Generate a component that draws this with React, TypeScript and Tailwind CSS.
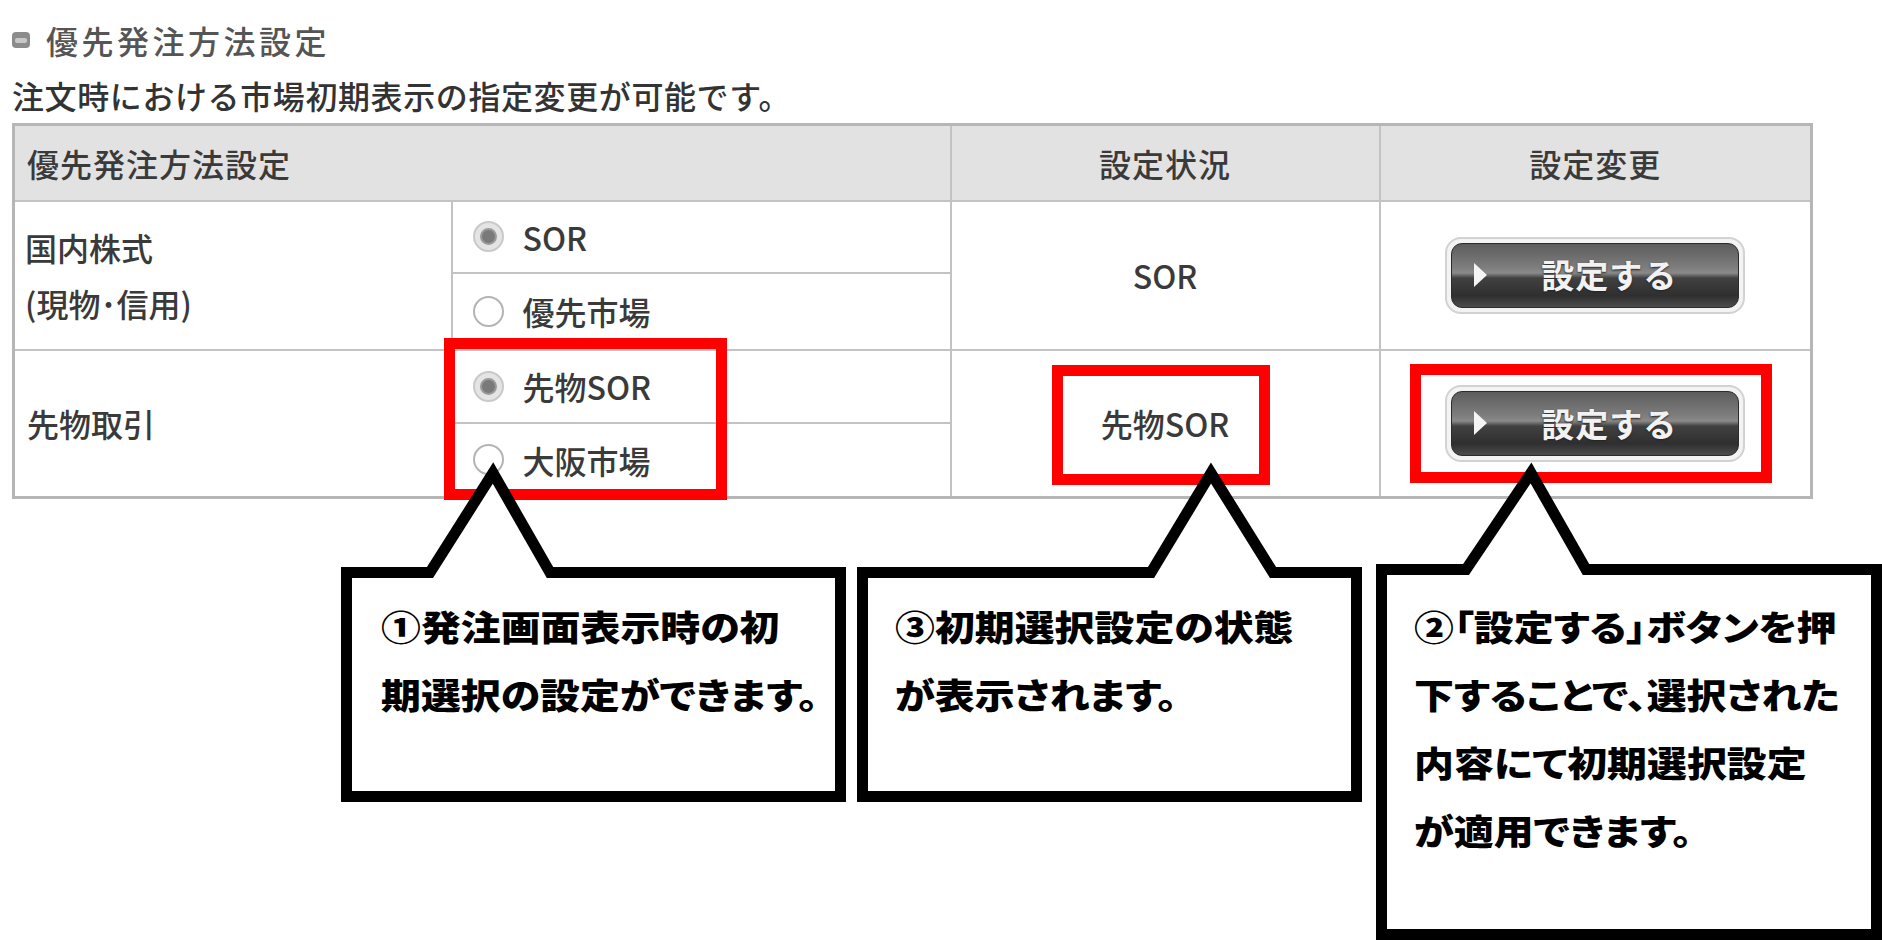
import React from "react";

function Radio({ checked, label }: { checked?: boolean; label: string }) {
  return (
    <div className="flex items-center">
      {checked ? (
        <span className="flex items-center justify-center w-[31px] h-[31px] rounded-full border-2 border-[#c9c9c9] bg-[#e4e4e4]">
          <span className="w-[17px] h-[17px] rounded-full bg-[#7a7a7a] border-2 border-[#9a9a9a]" />
        </span>
      ) : (
        <span className="w-[31px] h-[31px] rounded-full border-2 border-[#b4b4b4] bg-white" />
      )}
      <span className="ml-[19px]">{label}</span>
    </div>
  );
}

function SetButton() {
  return (
    <span className="inline-flex w-[300px] h-[77px] rounded-[16px] border-2 border-[#d2d2d2] bg-[#f3f3f3] p-[4px] align-middle">
      <span className="flex items-center w-full h-full rounded-[11px] border border-[#2c2c2c] bg-[linear-gradient(to_bottom,#5c5c5c_0%,#7e7e7e_38%,#8a8a8a_46%,#414141_54%,#2f2f2f_82%,#4c4c4c_100%)] pl-[22px]">
        <svg width="13" height="24" viewBox="0 0 13 24" className="shrink-0">
          <path d="M0 0 L13 12 L0 24 Z" fill="#f4f4f4" />
        </svg>
        <span className="ml-[54px] text-[#f2f2f2] font-bold text-[33px] tracking-[1px] [text-shadow:0_1px_2px_#222]">
          設定する
        </span>
      </span>
    </span>
  );
}

export default function App() {
  const cell = "border-2 border-[#c3c3c3]";
  return (
    <div className="relative w-[1882px] h-[940px] overflow-hidden bg-white font-['Noto_Sans_CJK_JP','Noto_Sans',sans-serif] text-[#3a3a3a]">
      <div className="pl-[12px]">
        {/* Title */}
        <div className="flex items-center h-[40px] mt-[20px]">
          <span className="flex items-center w-[18px] h-[16px] rounded-[4px] bg-[#8c8c8c] px-[3px]">
            <span className="w-full h-[5px] rounded-[2px] bg-[#c8c8c8]" />
          </span>
          <span className="ml-[16px] text-[32px] font-medium tracking-[3.5px] text-[#555] leading-[40px]">優先発注方法設定</span>
        </div>
        <div className="mt-[15px] h-[40px] leading-[40px] text-[32px] font-medium tracking-[0.6px] text-[#333]">
          注文時における市場初期表示の指定変更が可能です。
        </div>

        {/* Table */}
        <table className="mt-[8px] table-fixed border-collapse w-[1798px] border-[3px] border-[#b6b6b6] text-[32px] font-medium">
          <colgroup>
            <col className="w-[438px]" />
            <col className="w-[499px]" />
            <col className="w-[429px]" />
            <col className="w-[432px]" />
          </colgroup>
          <thead>
            <tr className="h-[76px] bg-[#e2e2e2]">
              <th colSpan={2} className={`${cell} text-left font-medium pl-[12px] tracking-[1px]`}>
                優先発注方法設定
              </th>
              <th className={`${cell} text-center font-medium tracking-[1px]`}>設定状況</th>
              <th className={`${cell} text-center font-medium tracking-[1px]`}>設定変更</th>
            </tr>
          </thead>
          <tbody>
            <tr className="h-[72px]">
              <td rowSpan={2} className={`${cell} pl-[10px] leading-[56px] align-middle`}>
                国内株式
                <br />
                (現物･信用)
              </td>
              <td className={`${cell} pl-[20px]`}>
                <Radio checked label="SOR" />
              </td>
              <td rowSpan={2} className={`${cell} text-center`}>
                SOR
              </td>
              <td rowSpan={2} className={`${cell} text-center`}>
                <SetButton />
              </td>
            </tr>
            <tr className="h-[77px]">
              <td className={`${cell} pl-[20px]`}>
                <Radio label="優先市場" />
              </td>
            </tr>
            <tr className="h-[73px]">
              <td rowSpan={2} className={`${cell} pl-[12px] align-middle`}>
                先物取引
              </td>
              <td className={`${cell} pl-[20px]`}>
                <Radio checked label="先物SOR" />
              </td>
              <td rowSpan={2} className={`${cell} text-center`}>
                先物SOR
              </td>
              <td rowSpan={2} className={`${cell} text-center`}>
                <SetButton />
              </td>
            </tr>
            <tr className="h-[75px]">
              <td className={`${cell} pl-[20px]`}>
                <Radio label="大阪市場" />
              </td>
            </tr>
          </tbody>
        </table>
      </div>

      {/* Red highlight boxes */}
      <div className="absolute left-[444px] top-[338px] w-[283px] h-[162px] border-[11px] border-[#ff0000]" />
      <div className="absolute left-[1052px] top-[365px] w-[218px] h-[120px] border-[11px] border-[#ff0000]" />
      <div className="absolute left-[1410px] top-[364px] w-[362px] h-[119px] border-[11px] border-[#ff0000]" />

      {/* Callout 1 */}
      <div className="absolute left-[341px] top-[462px] w-[505px] h-[340px]">
        <svg className="absolute inset-0" width="505" height="340" viewBox="0 0 505 340">
          <path
            d="M5.5 110.5 L89 110.5 L152 11 L209 110.5 L499.5 110.5 L499.5 334.5 L5.5 334.5 Z"
            fill="#fff"
            stroke="#000"
            strokeWidth="11"
            strokeMiterlimit="10"
          />
        </svg>
        <div className="relative pl-[40px] pt-[130px] text-[35px] leading-[68px] font-black text-black whitespace-nowrap [font-feature-settings:'palt']">
          <div className="origin-left scale-x-[1.14]">①発注画面表示時の初</div>
          <div className="origin-left scale-x-[1.14]">期選択の設定ができます。</div>
        </div>
      </div>

      {/* Callout 3 */}
      <div className="absolute left-[857px] top-[462px] w-[505px] h-[340px]">
        <svg className="absolute inset-0" width="505" height="340" viewBox="0 0 505 340">
          <path
            d="M5.5 110.5 L294 110.5 L354 11 L416 110.5 L499.5 110.5 L499.5 334.5 L5.5 334.5 Z"
            fill="#fff"
            stroke="#000"
            strokeWidth="11"
            strokeMiterlimit="10"
          />
        </svg>
        <div className="relative pl-[38px] pt-[130px] text-[35px] leading-[68px] font-black text-black whitespace-nowrap [font-feature-settings:'palt']">
          <div className="origin-left scale-x-[1.14]">③初期選択設定の状態</div>
          <div className="origin-left scale-x-[1.14]">が表示されます。</div>
        </div>
      </div>

      {/* Callout 2 */}
      <div className="absolute left-[1376px] top-[462px] w-[506px] h-[478px]">
        <svg className="absolute inset-0" width="506" height="478" viewBox="0 0 506 478">
          <path
            d="M5.5 107.5 L90 107.5 L155 11 L210 107.5 L500.5 107.5 L500.5 472.5 L5.5 472.5 Z"
            fill="#fff"
            stroke="#000"
            strokeWidth="11"
            strokeMiterlimit="10"
          />
        </svg>
        <div className="relative pl-[38px] pt-[130px] text-[35px] leading-[68px] font-black text-black whitespace-nowrap [font-feature-settings:'palt']">
          <div className="origin-left scale-x-[1.14]">②「設定する」ボタンを押</div>
          <div className="origin-left scale-x-[1.14]">下することで、選択された</div>
          <div className="origin-left scale-x-[1.14]">内容にて初期選択設定</div>
          <div className="origin-left scale-x-[1.14]">が適用できます。</div>
        </div>
      </div>
    </div>
  );
}
